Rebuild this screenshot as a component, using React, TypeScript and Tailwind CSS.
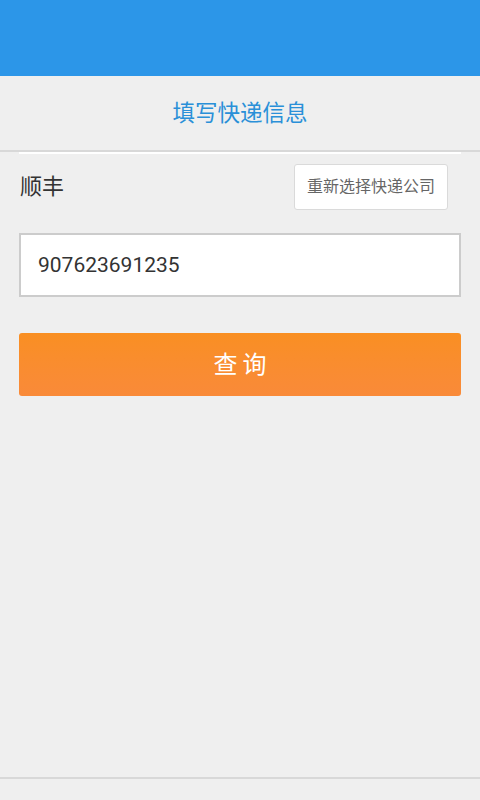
import React from "react";

const font = { fontFamily: '"Roboto", "Noto Sans CJK SC", sans-serif' };

export default function App() {
  return (
    <div className="w-[480px] h-[800px] bg-[#efefef] flex flex-col overflow-hidden" style={font}>
      <div className="h-[76px] bg-[#2c96e8] shrink-0" />
      <div className="h-[76px] flex items-center justify-center border-b-2 border-[#d8d8d8] shrink-0">
        <span className="text-[22.5px] text-[#2a90d8] leading-none">填写快递信息</span>
      </div>
      <div className="mx-[19px] h-[2px] bg-white" />
      <div className="flex-1 px-[19px] flex flex-col">
        <div className="flex items-start justify-between mt-[10px]">
          <span className="text-[22px] text-[#333] leading-none mt-[12px] ml-[1px]">顺丰</span>
          <button className="w-[154px] h-[46px] mr-[13px] bg-white border border-[#dadada] rounded-[3px] text-[16px] text-[#666] leading-none">
            重新选择快递公司
          </button>
        </div>
        <div className="mt-[23px] h-[64px] bg-white border-2 border-[#cccccc] flex items-center pl-[17px]">
          <span className="text-[21px] text-[#333] leading-none">907623691235</span>
        </div>
        <button className="mt-[36px] h-[63px] rounded-[3px] bg-gradient-to-b from-[#f98f22] to-[#f98a39] text-white text-[24px] leading-none tracking-[5px] pl-[5px]">
          查询
        </button>
        <div className="flex-1" />
      </div>
      <div className="h-[2px] bg-[#d8d8d8] shrink-0" />
      <div className="h-[21px] shrink-0" />
    </div>
  );
}
